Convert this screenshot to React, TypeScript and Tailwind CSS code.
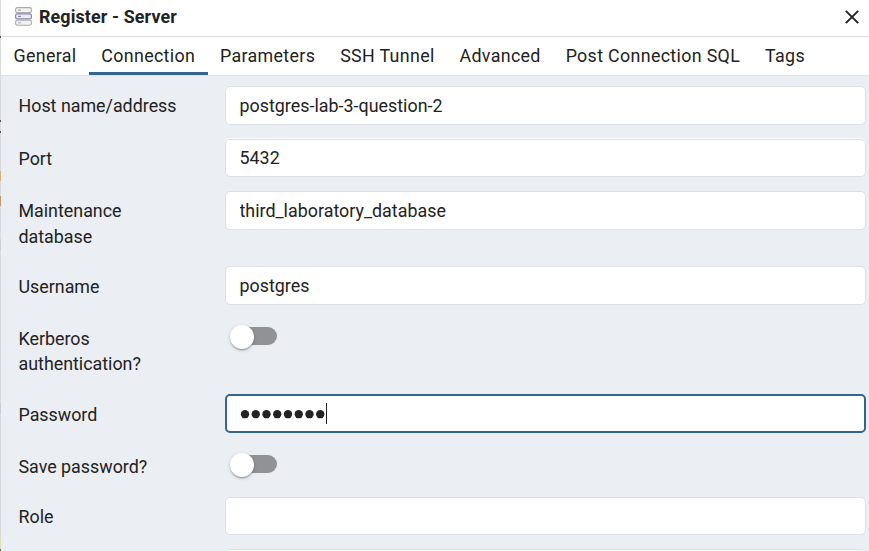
import React from "react";

function ServerIcon() {
  return (
    <svg width="17" height="19" viewBox="0 0 17 19" fill="none">
      <rect x="0.6" y="0.6" width="15.8" height="5" rx="1.6" fill="#f2f2f2" stroke="#ababab" strokeWidth="1.1" />
      <rect x="0.6" y="13.2" width="15.8" height="5" rx="1.6" fill="#f2f2f2" stroke="#ababab" strokeWidth="1.1" />
      <rect x="0.6" y="6.9" width="15.8" height="5" rx="1.6" fill="#ececf6" stroke="#8585ad" strokeWidth="1.2" />
      <path d="M3 3.1h3M3 15.7h3" stroke="#ababab" strokeWidth="1.1" />
      <path d="M3 9.4h3" stroke="#8585ad" strokeWidth="1.1" />
    </svg>
  );
}

function Label({ children, className = "leading-[25.5px]" }: { children: React.ReactNode; className?: string }) {
  return <div className={`w-[224px] shrink-0 pl-[17.5px] ${className}`}>{children}</div>;
}

function Field({ value = "", className = "h-[39px]" }: { value?: string; className?: string }) {
  return (
    <input
      readOnly
      value={value}
      className={`w-[641px] rounded-[5px] border border-[#dde0e6] bg-white px-[13.5px] tracking-[0.02px] outline-none ${className}`}
    />
  );
}

function Toggle({ className = "" }: { className?: string }) {
  return (
    <div className={`relative ml-[7px] h-[18px] w-[45px] rounded-full bg-[#919296] ${className}`}>
      <div className="absolute -left-[2px] -top-[2px] size-[24px] rounded-full bg-white shadow-[0_2px_2px_-1px_rgba(0,0,0,0.25),0_1px_1px_rgba(0,0,0,0.14),0_1px_4px_rgba(0,0,0,0.14)]" />
    </div>
  );
}

function PasswordField({ length }: { length: number }) {
  return (
    <div className="flex h-[39px] w-[641px] items-center rounded-[5px] border-2 border-[#326690] bg-white pl-[13px]">
      <svg width="86" height="11" viewBox="0 0 86 11" fill="#222" className="mt-[2px]">
        {Array.from({ length }, (_, i) => (
          <circle key={i} cx={5 + i * 10.75} cy="5.2" r="4.15" />
        ))}
      </svg>
      <span className="h-[21px] w-px bg-[#222]" />
    </div>
  );
}

export default function App() {
  return (
    <div className="flex h-[551px] w-[869px] overflow-hidden bg-[#ebeef3] font-['Roboto',sans-serif] text-[17.85px] text-[#222]">
      <div className="flex w-px shrink-0 flex-col bg-[#d9dadc]">
        <div className="mt-[36px] h-[2px] bg-[#555]" />
        <div className="mt-[82px] h-[2px] bg-[#555]" />
        <div className="mt-[9px] h-[2px] bg-[#555]" />
        <div className="mt-[38px] h-[10px] bg-[#e0a978]" />
        <div className="mt-[15px] h-[10px] bg-[#c99468]" />
        <div className="mt-[33px] h-[11px] bg-[#cbcdd1]" />
        <div className="mt-[153px] h-[11px] bg-[#cbcdd1]" />
        <div className="mt-[123px] h-[12px] bg-[#deddb0]" />
        <div className="h-[2px] bg-[#666]" />
      </div>
      <div className="flex min-w-0 flex-1 flex-col">
        <header className="flex h-[37px] shrink-0 items-center border-b border-[#dde0e6] bg-white pb-[3px] pl-[14px] pr-[10px]">
          <ServerIcon />
          <h1 className="ml-[7px] flex-1 pt-[2px] font-bold tracking-[0.13px]">Register - Server</h1>
          <svg width="14" height="14" viewBox="0 0 14 14" className="mt-[1px] stroke-[#222]" strokeWidth="1.9">
            <path d="M0.8 0.8l12.4 12.4M13.2 0.8L0.8 13.2" />
          </svg>
        </header>
        <nav className="flex h-[39px] shrink-0 border-b border-[#dde0e6] bg-white tracking-[0.33px]">
          {["General", "Connection", "Parameters", "SSH Tunnel", "Advanced", "Post Connection SQL", "Tags"].map((tab) => (
            <button
              key={tab}
              className={`h-[38px] shrink-0 whitespace-nowrap border-b-[3px] px-[12.45px] pt-[3px] ${tab === "Connection" ? "border-[#326690]" : "border-transparent"}`}
            >
              {tab}
            </button>
          ))}
        </nav>
        <main className="flex flex-col pt-[10px]">
          <div className="flex h-[53px] shrink-0">
            <Label className="pt-[7px] leading-[25.5px]">Host name/address</Label>
            <Field value="postgres-lab-3-question-2" />
          </div>
          <div className="flex h-[52px] shrink-0">
            <Label className="pt-[7px] leading-[25.5px]">Port</Label>
            <Field value="5432" className="h-[38px] pb-[2px] shadow-[0_-1px_0_#f8f9fb]" />
          </div>
          <div className="flex h-[75px] shrink-0">
            <Label className="pt-[7px] leading-[25.5px]">
              Maintenance
              <br />
              database
            </Label>
            <Field value="third_laboratory_database" />
          </div>
          <div className="flex h-[53px] shrink-0">
            <Label className="pt-[8px] leading-[25.5px]">Username</Label>
            <Field value="postgres" />
          </div>
          <div className="flex h-[75px] shrink-0">
            <Label className="pt-[7px] leading-[25px]">
              Kerberos
              <br />
              authentication?
            </Label>
            <Toggle className="mt-[8px]" />
          </div>
          <div className="flex h-[52px] shrink-0">
            <Label className="pt-[8px] leading-[25.5px]">Password</Label>
            <PasswordField length={8} />
          </div>
          <div className="flex h-[51px] shrink-0">
            <Label className="pt-[8px] leading-[25.5px]">Save password?</Label>
            <Toggle className="mt-[9px]" />
          </div>
          <div className="flex h-[52px] shrink-0">
            <Label className="pt-[7px] leading-[25.5px]">Role</Label>
            <Field className="h-[38px]" />
          </div>
          <div className="flex shrink-0 pl-[224px]">
            <div className="h-[39px] w-[641px] rounded-[5px] border border-[#dde0e6] bg-white" />
          </div>
        </main>
      </div>
    </div>
  );
}
